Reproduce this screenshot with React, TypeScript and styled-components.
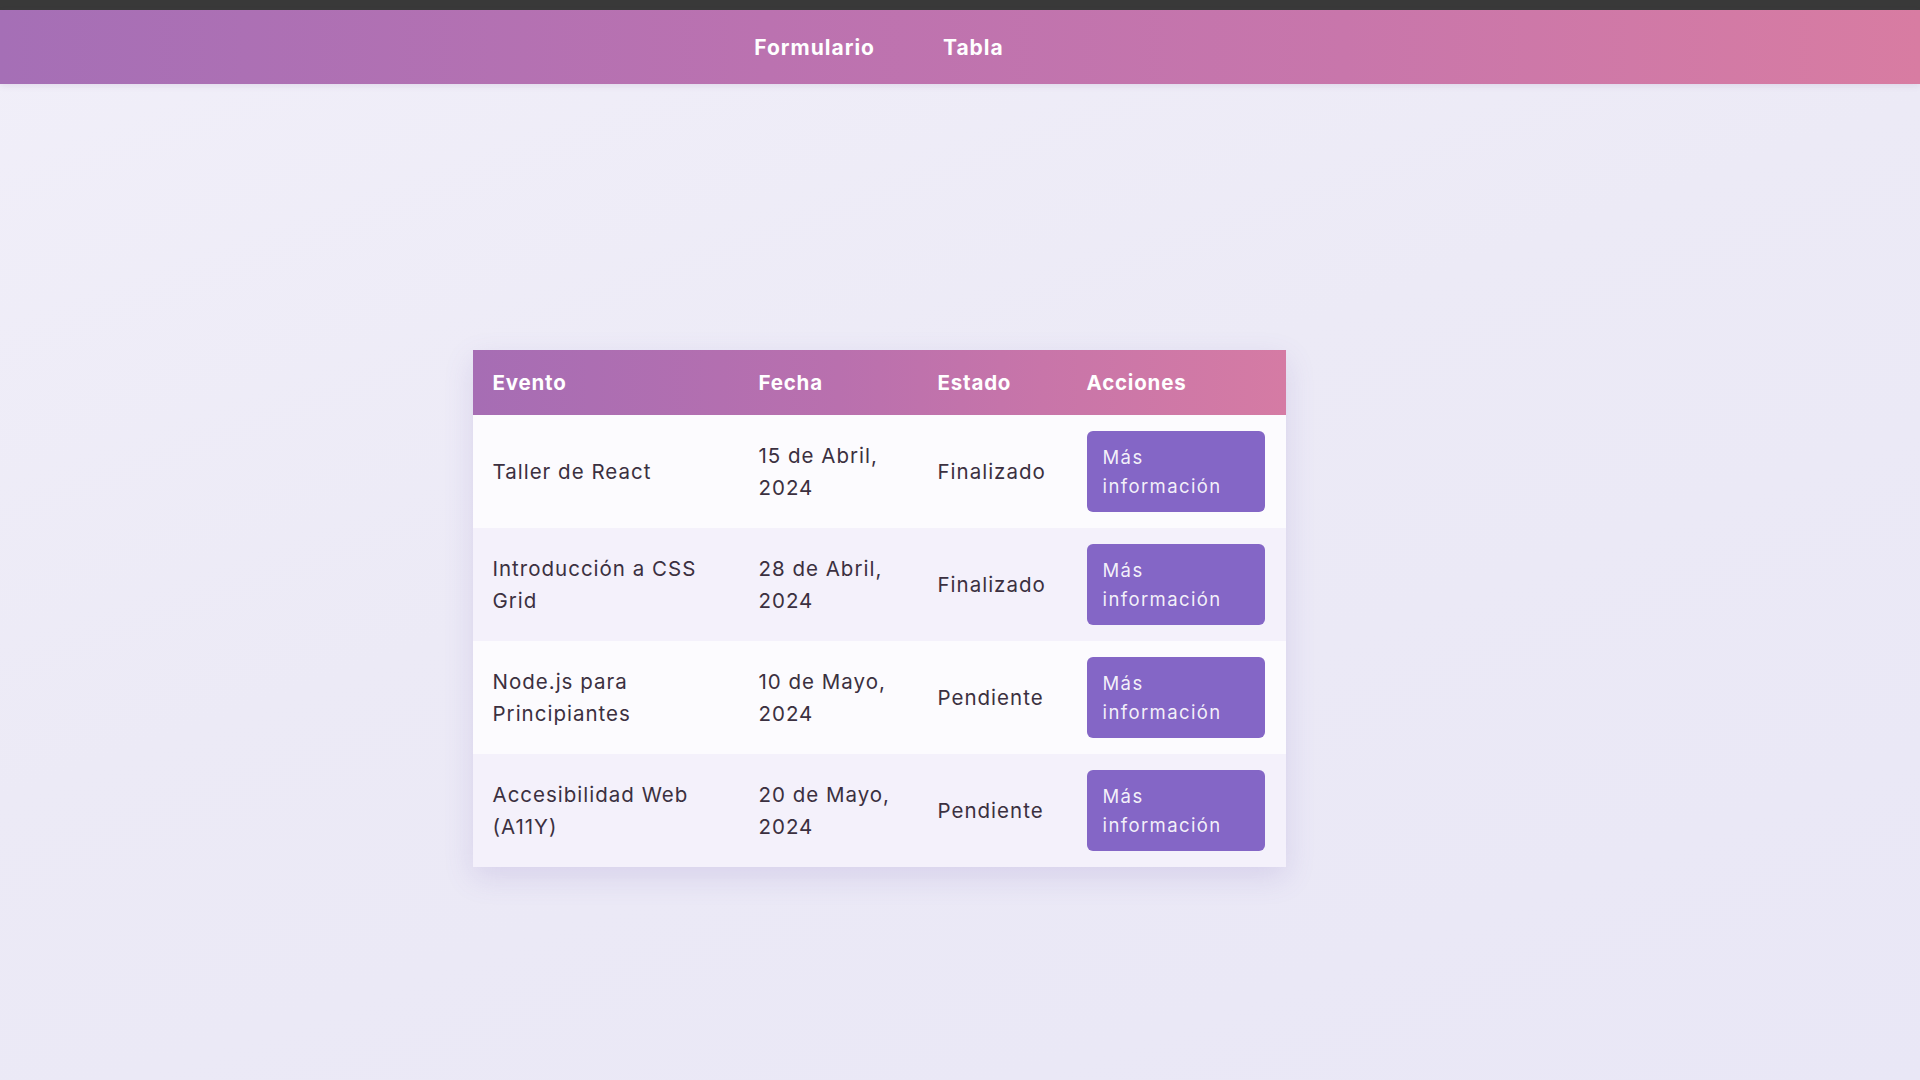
import React from "react";
import styled, { createGlobalStyle } from "styled-components";

const GlobalStyle = createGlobalStyle`
  * { box-sizing: border-box; }
  html, body { margin: 0; padding: 0; }
  body {
    font-family: Inter, "Noto Sans", "Liberation Sans", sans-serif;
    background: linear-gradient(160deg, #f1eff9 0%, #eceaf6 45%, #e9e7f6 100%);
    min-height: 1080px;
    color: #3b3040;
  }
`;

const Page = styled.div`
  min-height: 1080px;
  display: flex;
  flex-direction: column;
  border-top: 10px solid #393939;
`;

const NavBar = styled.nav`
  height: 74px;
  display: flex;
  align-items: center;
  justify-content: center;
  gap: 68px;
  padding-right: 162px;
  background: linear-gradient(90deg, #a56fb6 0%, #bb72b0 40%, #c876ab 70%, #d87ca2 100%);
  box-shadow: 0 2px 6px rgba(120, 80, 150, 0.12);
`;

const NavLink = styled.a`
  color: #ffffff;
  font-size: 21px;
  font-weight: 700;
  letter-spacing: 1px;
  text-decoration: none;
  cursor: pointer;
`;

const Main = styled.main`
  display: flex;
  justify-content: center;
  padding: 266px 162px 0 0;
`;

const Table = styled.table`
  width: 813px;
  table-layout: fixed;
  border-collapse: collapse;
  background: #fcfbfe;
  box-shadow: 0 10px 28px rgba(110, 90, 180, 0.16);
`;

const Col = styled.col<{ $w: number }>`
  width: ${(p) => p.$w}px;
`;

const HeadRow = styled.tr`
  background: linear-gradient(90deg, #a66db4 0%, #b970ae 45%, #c875a9 70%, #d57ba4 100%);
`;

const HeadCell = styled.th`
  padding: 16px 20px;
  text-align: left;
  color: #ffffff;
  font-size: 20.5px;
  font-weight: 700;
  line-height: 33px;
  letter-spacing: 0.8px;
`;

const Row = styled.tr<{ $alt: boolean }>`
  background: ${(p) => (p.$alt ? "#f4f1fb" : "#fcfbfe")};
`;

const Cell = styled.td`
  padding: 16px 20px;
  font-size: 20.5px;
  line-height: 32px;
  color: #3b3040;
  vertical-align: middle;
  letter-spacing: 1px;
`;

const InfoButton = styled.button`
  display: block;
  width: 178px;
  height: 81px;
  padding: 11px 16px;
  border: none;
  border-radius: 6px;
  background: #8466c6;
  color: rgba(255, 255, 255, 0.92);
  font-family: inherit;
  font-size: 18.5px;
  line-height: 29px;
  letter-spacing: 1.4px;
  text-align: left;
  cursor: pointer;
`;

const events = [
  { name: "Taller de React", date: "15 de Abril, 2024", status: "Finalizado" },
  { name: "Introducción a CSS Grid", date: "28 de Abril, 2024", status: "Finalizado" },
  { name: "Node.js para Principiantes", date: "10 de Mayo, 2024", status: "Pendiente" },
  { name: "Accesibilidad Web (A11Y)", date: "20 de Mayo, 2024", status: "Pendiente" },
];

export default function App() {
  return (
    <>
      <GlobalStyle />
      <Page>
        <NavBar>
          <NavLink>Formulario</NavLink>
          <NavLink>Tabla</NavLink>
        </NavBar>
        <Main>
          <Table>
            <colgroup>
              <Col $w={266} />
              <Col $w={179} />
              <Col $w={149} />
              <Col $w={219} />
            </colgroup>
            <thead>
              <HeadRow>
                <HeadCell>Evento</HeadCell>
                <HeadCell>Fecha</HeadCell>
                <HeadCell>Estado</HeadCell>
                <HeadCell>Acciones</HeadCell>
              </HeadRow>
            </thead>
            <tbody>
              {events.map((e, i) => (
                <Row key={e.name} $alt={i % 2 === 1}>
                  <Cell>{e.name}</Cell>
                  <Cell>{e.date}</Cell>
                  <Cell>{e.status}</Cell>
                  <Cell>
                    <InfoButton>Más información</InfoButton>
                  </Cell>
                </Row>
              ))}
            </tbody>
          </Table>
        </Main>
      </Page>
    </>
  );
}
